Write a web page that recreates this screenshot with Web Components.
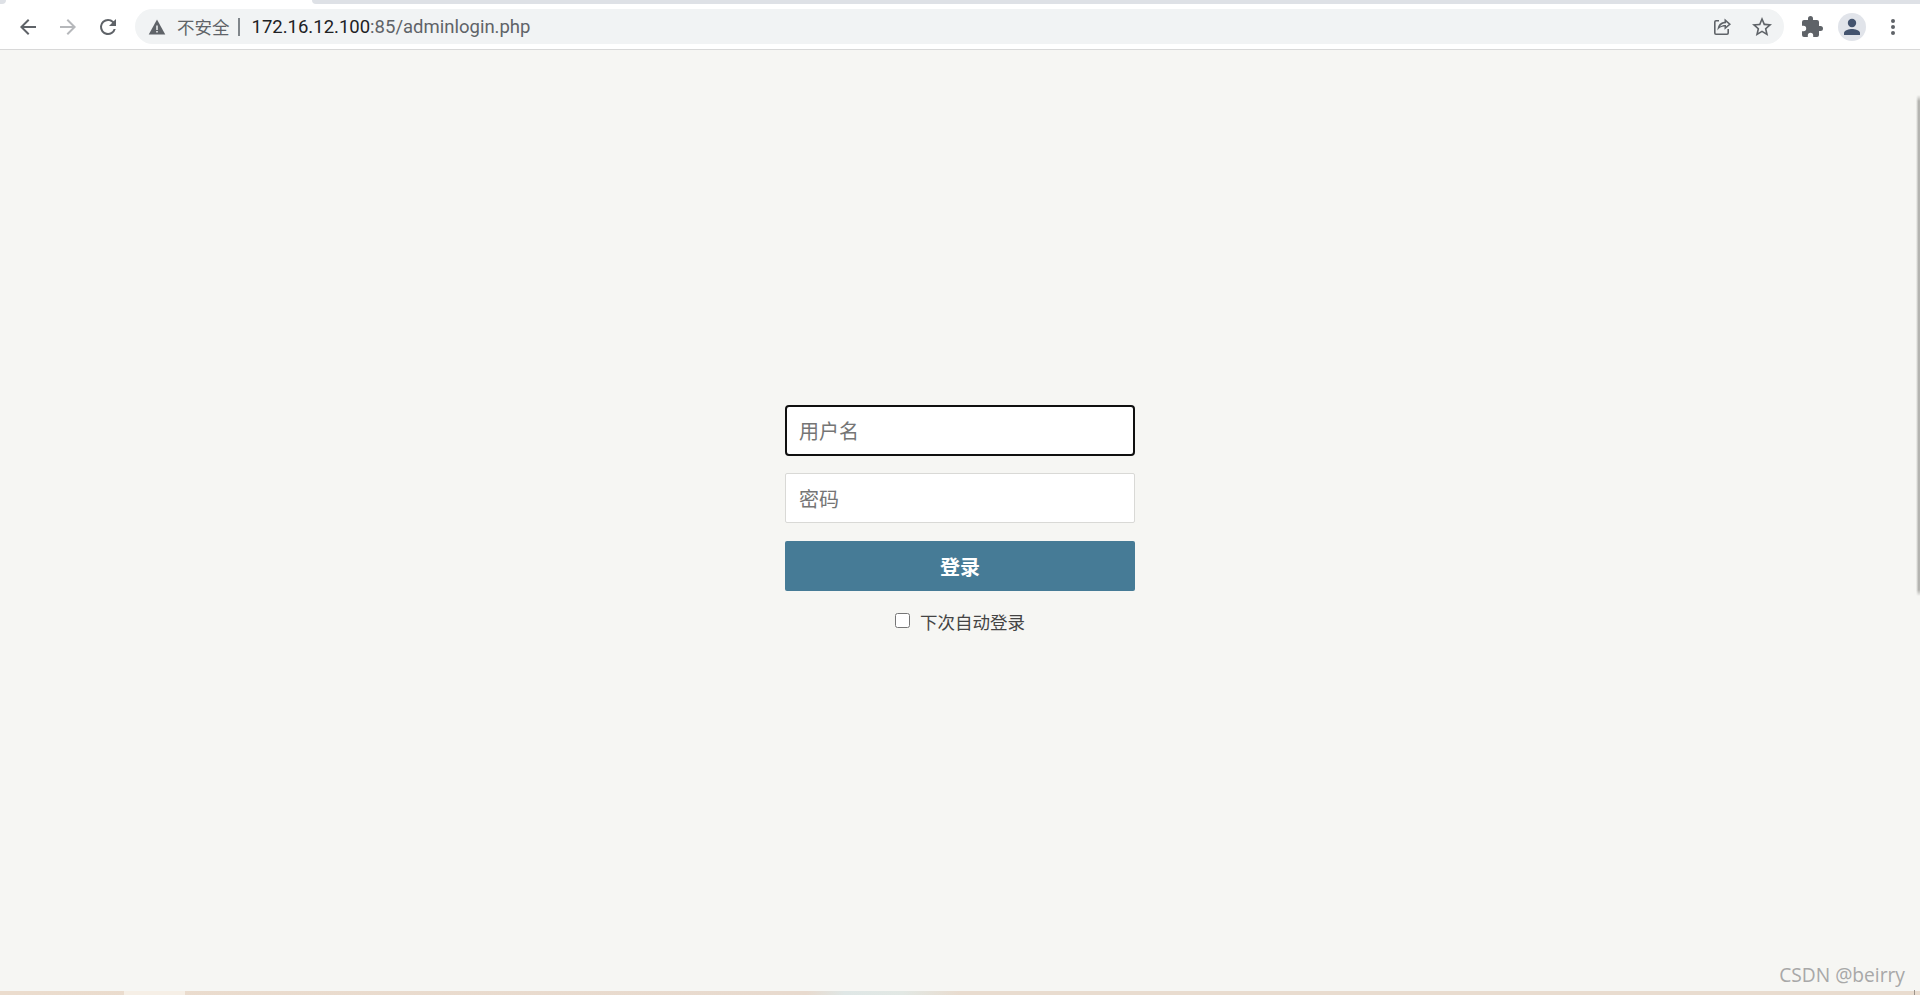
<!DOCTYPE html>
<html lang="zh">
<head>
<meta charset="utf-8">
<title>adminlogin</title>
<style>
html,body{margin:0;padding:0;height:100%;overflow:hidden}
body{display:flex;flex-direction:column;height:995px;background:#f6f6f3;font-family:"Roboto","Noto Sans CJK SC",sans-serif}
</style>
</head>
<body>
<browser-chrome></browser-chrome>
<login-page>
  <login-form>
    <login-field focused>用户名</login-field>
    <login-field>密码</login-field>
    <login-button>登录</login-button>
    <remember-me>下次自动登录</remember-me>
  </login-form>
</login-page>
<script>
const def=(name,html)=>customElements.define(name,class extends HTMLElement{
  constructor(){super();this.attachShadow({mode:'open'}).innerHTML=html;}
});
def('browser-chrome',`<style>
:host{display:block;flex:none;background:#fff;color:#5f6368}
.tabs{height:4px;display:flex;background:#fff}
.tabs i:first-child{width:6px;background:#dee1e6;border-bottom-right-radius:4px}
.tabs b{width:306px}
.tabs i:last-child{flex:1;background:#dee1e6;border-bottom-left-radius:4px}
.bar{height:45px;box-sizing:border-box;display:flex;align-items:center;padding:0 15px 0 15.500px;gap:16px}
svg{display:block;width:24px;height:24px;flex:none;fill:#5f6368}
.omni{flex:1;height:35px;margin-left:-.5px;background:#f1f3f4;border-radius:18px;display:flex;align-items:center;padding:0 10px 0 13px}
.omni .warn{width:18px;height:18px;margin-right:11px}
.sec{font:17.500px "Noto Sans CJK SC",sans-serif;color:#5f6368;white-space:nowrap}
.sep{width:2px;height:18px;background:#80868b;margin:0 12px 0 8px;flex:none}
.url{font:18.500px/24px "Roboto",sans-serif;color:#5f6368;flex:1;white-space:nowrap}
.url b{font-weight:400;color:#202124}
.omni .act{width:24px;height:24px;margin-left:16px}
.ava{width:28px;height:28px;border-radius:50%;background:#e1e4ea;display:flex;align-items:center;justify-content:center;margin:0 -1px 0 -2px;flex:none}
.ava svg{width:24px;height:24px;fill:#44546f}
</style>
<div class="tabs"><i></i><b></b><i></i></div>
<div class="bar">
<svg viewBox="0 0 24 24"><path d="M20 11H7.830l5.590-5.590L12 4l-8 8 8 8 1.410-1.410L7.830 13H20z"/></svg>
<svg viewBox="0 0 24 24" style="fill:#b6b8bb"><path d="M12 4l-1.410 1.410L16.170 11H4v2h12.170l-5.580 5.590L12 20l8-8z"/></svg>
<svg viewBox="0 0 24 24"><path d="M17.650 6.350A7.960 7.960 0 0 0 12 4a8 8 0 1 0 7.730 10h-2.080A6 6 0 1 1 12 6c1.660 0 3.140.690 4.220 1.780L13 11h7V4z"/></svg>
<div class="omni">
<svg class="warn" viewBox="0 0 24 24"><path d="M1 22h22L12 2z" fill="#5f6368"/><path d="M11 10h2v6h-2zM11 17.200h2v2h-2z" fill="#f1f3f4"/></svg>
<span class="sec">不安全</span><span class="sep"></span>
<span class="url"><b>172.16.12.100</b>:85/adminlogin.php</span>
<svg class="act" viewBox="0 0 24 24"><path d="M9 5H6a2 2 0 0 0-2 2v11a2 2 0 0 0 2 2h11a2 2 0 0 0 2-2v-4h-1.600v4c0 .2-.2.4-.4.4H6a.4.4 0 0 1-.4-.4V7c0-.2.2-.4.4-.4h3z"/><path d="M14.500 3.500v3.300C10.400 7.100 7.800 9.900 7.400 15.500c1.500-2.700 3.800-3.900 7.100-3.900v3.200L21 9.200zM16 6.900l2.700 2.300L16 11.500V10c-2.800-.1-4.600.6-6 1.800.9-2.100 2.800-3.400 6-3.500z"/></svg>
<svg class="act" viewBox="0 0 24 24"><path d="M22 9.240l-7.190-.62L12 2 9.190 8.630 2 9.240l5.460 4.730L5.820 21 12 17.270 18.180 21l-1.630-7.030L22 9.240zM12 15.400l-3.760 2.270 1-4.280-3.320-2.880 4.380-.38L12 6.100l1.710 4.040 4.380.38-3.320 2.880 1 4.280L12 15.400z"/></svg>
</div>
<svg viewBox="0 0 24 24"><path d="M20.500 11H19V7a2 2 0 0 0-2-2h-4V3.500a2.500 2.500 0 0 0-5 0V5H4a2 2 0 0 0-2 2v3.800h1.500a2.700 2.700 0 0 1 0 5.400H2V20a2 2 0 0 0 2 2h3.800v-1.500a2.700 2.700 0 0 1 5.400 0V22H17a2 2 0 0 0 2-2v-4h1.500a2.500 2.500 0 0 0 0-5z"/></svg>
<div class="ava"><svg viewBox="0 0 24 24"><circle cx="12" cy="8" r="4.200"/><path d="M4 20v-2c0-2.700 5.300-4 8-4s8 1.300 8 4v2z"/></svg></div>
<svg viewBox="0 0 24 24"><circle cx="12" cy="6" r="2"/><circle cx="12" cy="12" r="2"/><circle cx="12" cy="18" r="2"/></svg>
</div>`);
def('login-page',`<style>
:host{display:block;flex:1;min-height:0;box-sizing:border-box;border-top:1px solid #d8d8d8;padding-top:355px;position:relative;background:#f6f6f3}
.strip{position:absolute;left:0;right:0;bottom:0;height:4px;background:linear-gradient(90deg,#ebdccd 0,#e8dace 42%,#dfe7e6 44%,#e2e8e4 47%,#e9dccf 50%,#e9dccf 100%)}
.seg{position:absolute;left:124px;width:61px;height:100%;background:#f6efe6}
.tick{position:absolute;left:1914px;top:-1px;width:1px;height:5px;background:#9c948c}
.mark{position:absolute;right:15px;bottom:8px;font:19.200px/24px "Open Sans",sans-serif;color:#a8a8a8;white-space:nowrap}
.edge{position:absolute;right:0;top:45px;width:4px;height:501px;background:linear-gradient(90deg,rgba(170,170,166,0),#b4b4b0 60%);-webkit-mask-image:linear-gradient(180deg,transparent,#000 6px,#000 495px,transparent)}
</style>
<slot></slot>
<div class="edge"></div>
<div class="mark">CSDN @beirry</div>
<div class="strip"><div class="seg"></div><div class="tick"></div></div>`);
def('login-form',`<style>
:host{display:flex;flex-direction:column;width:350px;margin:0 auto}
</style><slot></slot>`);
customElements.define('login-field',class extends HTMLElement{
  constructor(){super();this.attachShadow({mode:'open'}).innerHTML=`<style>
:host{display:flex;align-items:center;box-sizing:border-box;height:50px;margin-bottom:18px;padding:0 13px;background:#fff;border:1px solid #d9d9d6;border-radius:2px;font:20px "Noto Sans CJK SC",sans-serif;color:#757575}
:host([focused]){height:51px;margin-bottom:17px;padding:0 12px;border:2px solid #101010;border-radius:4px}
</style><slot></slot>`;}
});
def('login-button',`<style>
:host{display:flex;align-items:center;justify-content:center;height:50px;background:#467b96;border-radius:2px;color:#fff;font:700 20px "Noto Sans CJK SC",sans-serif}
</style><slot></slot>`);
def('remember-me',`<style>
:host{display:flex;align-items:center;justify-content:center;gap:10px;height:25px;margin-top:18px;font:17.500px/25px "Noto Sans CJK SC",sans-serif;color:#444}
input{width:15px;height:15px;margin:0 0 3px;flex:none}
</style><input type="checkbox"><span><slot></slot></span>`);
</script>
</body>
</html>
